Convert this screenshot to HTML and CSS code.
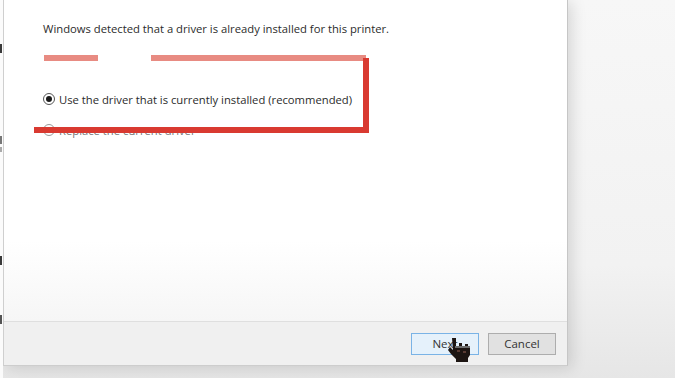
FILE: index.html
```html
<!DOCTYPE html>
<html lang="en">
<head>
    <meta charset="UTF-8">
    <meta name="viewport" content="width=device-width, initial-scale=1.0">
    <title>Install Printer Driver</title>
    <link rel="stylesheet" href="styles.css">
</head>
<body>
    <div class="screen">
        <div class="behind">
            <span class="mark mark-n"></span>
            <span class="mark mark-x"></span>
            <span class="mark mark-c"></span>
            <span class="mark mark-i"></span>
            <span class="mark mark-v"></span>
        </div>

        <div class="dialog">
            <div class="content">
                <p class="intro">Windows detected that a driver is already installed for this printer.</p>

                <form class="choices">
                    <label class="choice">
                        <span class="radio checked"></span>
                        Use the driver that is currently installed (recommended)
                    </label>
                    <label class="choice muted">
                        <span class="radio"></span>
                        Replace the current driver
                    </label>
                </form>

                <!-- red marker strokes drawn over the screenshot -->
                <span class="pen pen-top-a"></span>
                <span class="pen pen-top-b"></span>
                <span class="pen pen-right"></span>
                <span class="pen pen-bottom"></span>
            </div>

            <div class="footer">
                <button type="button" class="btn btn-default">Next
                    <svg class="cursor" width="26" height="26" viewBox="0 0 26 26">
                        <path d="M5 1h4v8h3V6h3v3h3V7h3v3h2v8l-2 3v4H9v-3L4 17 1 13l2-3 3 3z" fill="#1d1512"/>
                        <path d="M8 9h15v2H8z" fill="#6e6e6e"/>
                        <path d="M10 13h3v2h-3zM16 14h3v2h-3z" fill="#5a3a32"/>
                    </svg>
                </button>
                <button type="button" class="btn">Cancel</button>
            </div>
        </div>
    </div>
</body>
</html>
```

FILE: styles.css
```css
body {
    margin: 0;
    padding: 0;
    font-family: "Open Sans", "Noto Sans", Arial, sans-serif;
    background-color: #f2f2f2;
    overflow: hidden;
}

.screen {
    display: flex;
    width: 675px;
    height: 378px;
    background: linear-gradient(#f7f7f7, #f2f2f2 70%, #e6e6e6);
}

.behind {
    width: 3px;
    height: 378px;
    background-color: #fbfbfb;
    position: relative;
    overflow: hidden;
}

.mark {
    position: absolute;
    left: 0;
    width: 2px;
    background-color: #3a3a3a;
}

.mark-n { top: 44px; height: 9px; }
.mark-x { top: 136px; height: 8px; background-color: #777; }
.mark-c { top: 147px; height: 5px; background-color: #aaa; }
.mark-i { top: 256px; height: 9px; }
.mark-v { top: 315px; height: 9px; background-color: #555; }

.dialog {
    width: 565px;
    height: 366px;
    display: flex;
    flex-direction: column;
    border-left: 1px solid #cfcfcf;
    border-right: 1px solid #c6c6c6;
    border-bottom: 1px solid #cdcdcd;
    box-sizing: border-box;
    box-shadow: 4px 2px 14px rgba(0, 0, 0, 0.13);
}

.content {
    flex: 1;
    position: relative;
    padding: 0 0 0 39px;
    background: linear-gradient(#ffffff, #ffffff 75%, #f6f6f6);
}

.intro {
    margin: 21px 0 0;
    font-size: 11.25px;
    line-height: 16px;
    color: #2b2b2b;
}

.choices {
    margin-top: 54px;
}

.choice {
    display: flex;
    align-items: center;
    gap: 4px;
    height: 16px;
    margin-bottom: 15px;
    font-size: 11.25px;
    color: #2b2b2b;
}

.choice.muted {
    color: #777;
}

.radio {
    width: 10px;
    height: 10px;
    border: 1px solid #555;
    border-radius: 50%;
    display: flex;
    align-items: center;
    justify-content: center;
    flex-shrink: 0;
}

.muted .radio {
    border-color: #999;
}

.radio.checked::after {
    content: "";
    width: 6px;
    height: 6px;
    border-radius: 50%;
    background-color: #1a1a1a;
}

.pen {
    position: absolute;
}

.pen-top-a {
    left: 40px;
    top: 55px;
    width: 54px;
    height: 6px;
    background-color: #e88b82;
}

.pen-top-b {
    left: 147px;
    top: 55px;
    width: 215px;
    height: 6px;
    background-color: #e88b82;
}

.pen-right {
    left: 359px;
    top: 58px;
    width: 6px;
    height: 75px;
    background-color: #d93a31;
}

.pen-bottom {
    left: 30px;
    top: 127px;
    width: 335px;
    height: 6px;
    background-color: #d93a31;
}

.footer {
    height: 43px;
    display: flex;
    align-items: center;
    justify-content: flex-end;
    gap: 9px;
    padding-right: 11px;
    background-color: #f0f0f0;
    border-top: 1px solid #dfdfdf;
}

.btn {
    position: relative;
    width: 68px;
    height: 22px;
    padding: 0;
    font-family: inherit;
    font-size: 11.5px;
    color: #333;
    background-color: #e1e1e1;
    border: 1px solid #adadad;
}

.btn-default {
    background-color: #e5f1fb;
    border-color: #7ab3e6;
}

.cursor {
    position: absolute;
    left: 35px;
    top: 3px;
}
```
